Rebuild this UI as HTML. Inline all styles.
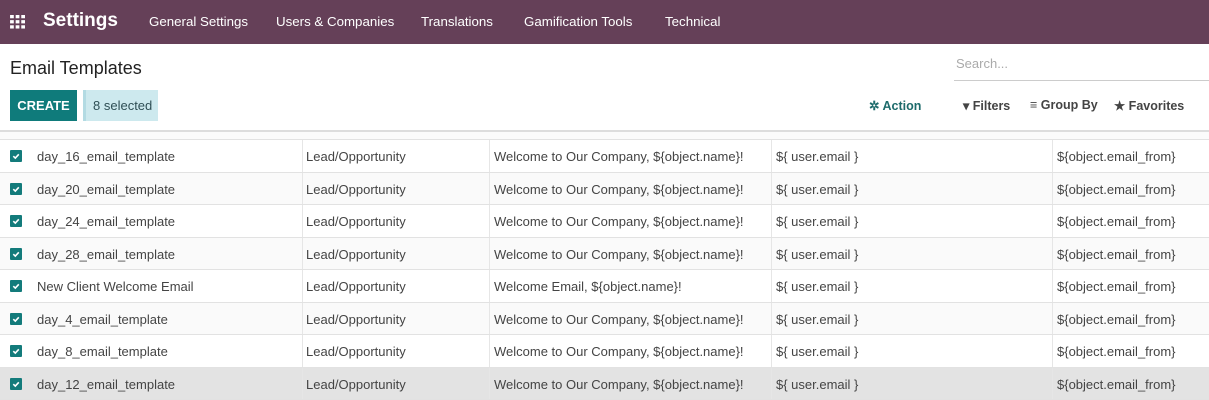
<!DOCTYPE html>
<html><head><meta charset="utf-8"><style>
*{box-sizing:border-box;margin:0;padding:0}
body{width:1209px;height:400px;overflow:hidden;background:#fff;font-family:"Liberation Sans",sans-serif;color:#4c4c4c;position:relative}
.nav{position:absolute;left:0;top:0;width:1209px;height:44px;background:#654058;color:#fff}
.nav .t{position:absolute;font-size:13.3px;top:14px}
.title{position:absolute;left:10px;top:58px;font-size:18px;color:#222}
.btn{position:absolute;left:10px;top:90px;width:67px;height:31px;background:#0f7b7b;color:#fff;font-weight:bold;font-size:13px;text-align:center;line-height:31px}
.sel{position:absolute;left:83px;top:90px;width:75px;height:31px;background:#cde9ee;border-left:3px solid #b3dbe3;color:#2f4f55;font-size:13px;line-height:31px;padding-left:7px}
.search{position:absolute;left:954px;top:56px;width:255px;height:25px;border-bottom:1px solid #ccc;color:#aaa;font-size:13px;padding-left:2px}
.tb{position:absolute;top:98px;font-size:12.5px;font-weight:bold;color:#444}
.hl{position:absolute;left:0;top:130px;width:1209px;height:2px;background:#ddd}
.hd{position:absolute;left:0;top:132px;width:1209px;height:8px;background:#fbfbfb;border-bottom:1px solid #e2e2e2}
.row{position:absolute;left:0;width:1209px;height:32.5px;border-bottom:1px solid #e2e2e2;font-size:13px;color:#444}
.row span{position:absolute;top:9px}
.row i{position:absolute;top:0;bottom:0;width:1px;background:#e6e6e6}
.cb{position:absolute;left:10px;top:10px;width:12px;height:12px;background:#137b7b;border-radius:1px}
</style></head><body>
<div class="nav">
<svg style="position:absolute;left:10px;top:15px" width="16" height="14" viewBox="0 0 17 15" fill="#fff"><rect x="0" y="0" width="4" height="3.5"/><rect x="6" y="0" width="4" height="3.5"/><rect x="12" y="0" width="4" height="3.5"/><rect x="0" y="5.5" width="4" height="3.5"/><rect x="6" y="5.5" width="4" height="3.5"/><rect x="12" y="5.5" width="4" height="3.5"/><rect x="0" y="11" width="4" height="3.5"/><rect x="6" y="11" width="4" height="3.5"/><rect x="12" y="11" width="4" height="3.5"/></svg>
<div class="t" style="left:43px;top:10px;font-size:19px;font-weight:bold">Settings</div>
<div class="t" style="left:149px">General Settings</div>
<div class="t" style="left:276px">Users &amp; Companies</div>
<div class="t" style="left:421px">Translations</div>
<div class="t" style="left:524px">Gamification Tools</div>
<div class="t" style="left:665px">Technical</div>
</div>
<div class="title">Email Templates</div>
<div class="btn">CREATE</div>
<div class="sel">8 selected</div>
<div class="search">Search...</div>
<div class="tb" style="left:869px;color:#1d6b6b">✲ Action</div>
<div class="tb" style="left:963px">▾ Filters</div>
<div class="tb" style="left:1030px">≡ Group By</div>
<div class="tb" style="left:1114px">★ Favorites</div>
<div class="hl"></div><div class="hd"></div>
<div id="rows"></div>
<script>
var n=["day_16_email_template","day_20_email_template","day_24_email_template","day_28_email_template","New Client Welcome Email","day_4_email_template","day_8_email_template","day_12_email_template"];
var h="";
for(var k=0;k<8;k++){var bg=k==7?"#e3e3e3":(k%2?"#fafafa":"#fff");var sub=k==4?"Welcome Email, ${object.name}!":"Welcome to Our Company, ${object.name}!";
h+='<div class="row" style="top:'+(140+k*32.5)+'px;background:'+bg+'"><div class="cb"><svg width="12" height="12" viewBox="0 0 12 12"><path d="M3.3 6.2l2 1.9 3.5-3.8" stroke="#fff" stroke-width="1.6" fill="none"/></svg></div><span style="left:37px">'+n[k]+'</span><i style="left:302px"></i><span style="left:306px">Lead/Opportunity</span><i style="left:489px"></i><span style="left:494px">'+sub+'</span><i style="left:771px"></i><span style="left:776px">${ user.email }</span><i style="left:1052px"></i><span style="left:1057px">${object.email_from}</span></div>';}
document.getElementById("rows").innerHTML=h;
</script>
</body></html>
